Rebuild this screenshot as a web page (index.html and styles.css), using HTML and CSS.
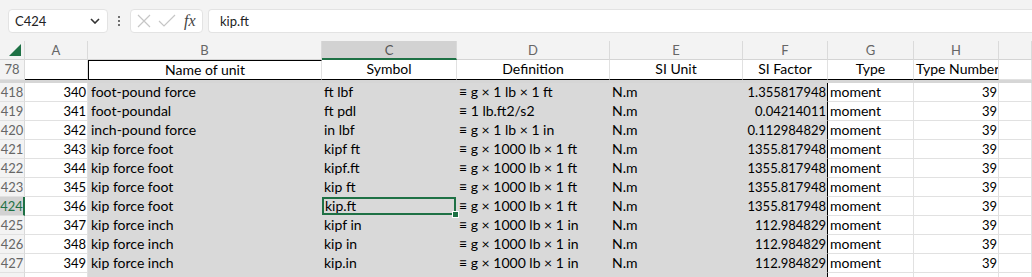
FILE: index.html
```html
<!DOCTYPE html>
<html lang="en">
<head>
  <meta charset="UTF-8">
  <title>Units - Sheet1</title>
  <link rel="stylesheet" href="styles.css">
</head>
<body>
  <div class="toolbar">
    <div class="namebox">
      <span>C424</span>
      <svg class="chev" width="10" height="6" viewBox="0 0 10 6"><path d="M1 1l4 4 4-4" fill="none" stroke="#333" stroke-width="1.6"/></svg>
    </div>
    <div class="dots"><i></i><i></i><i></i></div>
    <div class="fxbox">
      <svg width="16" height="16" viewBox="0 0 16 16"><path d="M2 2l12 12M14 2L2 14" stroke="#c6c6c6" stroke-width="1.2" fill="none"/></svg>
      <svg width="18" height="16" viewBox="0 0 18 16"><path d="M1 8l5 5L17 2" stroke="#c6c6c6" stroke-width="1.2" fill="none"/></svg>
      <span class="fx">fx</span>
    </div>
    <div class="formula">kip.ft</div>
  </div>

  <div class="sheet">
    <div class="row colhdr">
      <div class="corner"><svg width="12" height="12" viewBox="0 0 12 12"><path d="M12 0V12H0z" fill="#1e7145"/></svg></div>
      <div>A</div><div>B</div><div class="sel">C</div><div>D</div><div>E</div><div>F</div><div>G</div><div>H</div><div></div>
    </div>

    <div class="row titles">
      <div class="rh">78</div>
      <div class="c"></div>
      <div class="c ctr b-left b-top">Name of unit</div>
      <div class="c ctr">Symbol</div>
      <div class="c ctr">Definition</div>
      <div class="c ctr">SI Unit</div>
      <div class="c ctr">SI Factor</div>
      <div class="c ctr">Type</div>
      <div class="c ctr">Type Number</div>
      <div class="c blank"></div>
    </div>

    <div class="freeze"></div>

    <div class="row"><div class="rh">418</div><div class="c num">340</div><div class="c g b-left">foot-pound force</div><div class="c g">ft lbf</div><div class="c g">≡ g × 1 lb × 1 ft</div><div class="c g">N.m</div><div class="c g num b-right">1.355817948</div><div class="c">moment</div><div class="c num">39</div><div class="c"></div></div>
    <div class="row"><div class="rh">419</div><div class="c num">341</div><div class="c g b-left">foot-poundal</div><div class="c g">ft pdl</div><div class="c g">≡ 1 lb.ft2/s2</div><div class="c g">N.m</div><div class="c g num b-right">0.04214011</div><div class="c">moment</div><div class="c num">39</div><div class="c"></div></div>
    <div class="row"><div class="rh">420</div><div class="c num">342</div><div class="c g b-left">inch-pound force</div><div class="c g">in lbf</div><div class="c g">≡ g × 1 lb × 1 in</div><div class="c g">N.m</div><div class="c g num b-right">0.112984829</div><div class="c">moment</div><div class="c num">39</div><div class="c"></div></div>
    <div class="row"><div class="rh">421</div><div class="c num">343</div><div class="c g b-left">kip force foot</div><div class="c g">kipf ft</div><div class="c g">≡ g × 1000 lb × 1 ft</div><div class="c g">N.m</div><div class="c g num b-right">1355.817948</div><div class="c">moment</div><div class="c num">39</div><div class="c"></div></div>
    <div class="row"><div class="rh">422</div><div class="c num">344</div><div class="c g b-left">kip force foot</div><div class="c g">kipf.ft</div><div class="c g">≡ g × 1000 lb × 1 ft</div><div class="c g">N.m</div><div class="c g num b-right">1355.817948</div><div class="c">moment</div><div class="c num">39</div><div class="c"></div></div>
    <div class="row"><div class="rh">423</div><div class="c num">345</div><div class="c g b-left">kip force foot</div><div class="c g">kip ft</div><div class="c g">≡ g × 1000 lb × 1 ft</div><div class="c g">N.m</div><div class="c g num b-right">1355.817948</div><div class="c">moment</div><div class="c num">39</div><div class="c"></div></div>
    <div class="row"><div class="rh active">424</div><div class="c num">346</div><div class="c g b-left">kip force foot</div><div class="c g current">kip.ft<span class="handle"></span></div><div class="c g">≡ g × 1000 lb × 1 ft</div><div class="c g">N.m</div><div class="c g num b-right">1355.817948</div><div class="c">moment</div><div class="c num">39</div><div class="c"></div></div>
    <div class="row"><div class="rh">425</div><div class="c num">347</div><div class="c g b-left">kip force inch</div><div class="c g">kipf in</div><div class="c g">≡ g × 1000 lb × 1 in</div><div class="c g">N.m</div><div class="c g num b-right">112.984829</div><div class="c">moment</div><div class="c num">39</div><div class="c"></div></div>
    <div class="row"><div class="rh">426</div><div class="c num">348</div><div class="c g b-left">kip force inch</div><div class="c g">kip in</div><div class="c g">≡ g × 1000 lb × 1 in</div><div class="c g">N.m</div><div class="c g num b-right">112.984829</div><div class="c">moment</div><div class="c num">39</div><div class="c"></div></div>
    <div class="row"><div class="rh">427</div><div class="c num">349</div><div class="c g b-left">kip force inch</div><div class="c g">kip.in</div><div class="c g">≡ g × 1000 lb × 1 in</div><div class="c g">N.m</div><div class="c g num b-right">112.984829</div><div class="c">moment</div><div class="c num">39</div><div class="c"></div></div>
    <div class="row"><div class="rh"></div><div class="c"></div><div class="c g b-left"></div><div class="c g"></div><div class="c g"></div><div class="c g"></div><div class="c g b-right"></div><div class="c"></div><div class="c"></div><div class="c"></div></div>
  </div>
</body>
</html>
```

FILE: styles.css
```css
body {
  margin: 0;
  font-family: Lato, "Open Sans", sans-serif;
  background: #fff;
  overflow: hidden;
  color: #000;
}

/* formula bar */
.toolbar {
  height: 41px;
  background: #f3f3f3;
  display: flex;
  align-items: center;
  padding: 0 0 0 8px;
  box-sizing: border-box;
}

.namebox {
  width: 100px;
  height: 24px;
  background: #fff;
  border: 1px solid #e3e3e3;
  border-radius: 4px;
  box-sizing: border-box;
  display: flex;
  align-items: center;
  justify-content: space-between;
  padding: 0 7px 0 6px;
  font-size: 13px;
  color: #222;
}

.dots {
  width: 22px;
  display: flex;
  flex-direction: column;
  align-items: center;
  gap: 2px;
}

.dots i {
  width: 2px;
  height: 2px;
  background: #444;
  border-radius: 1px;
}

.fxbox {
  width: 73px;
  height: 24px;
  background: #fff;
  border: 1px solid #e3e3e3;
  border-radius: 4px;
  box-sizing: border-box;
  display: flex;
  align-items: center;
  gap: 6px;
  padding: 0 6px 0 5px;
}

.fx {
  font-family: "Liberation Serif", serif;
  font-style: italic;
  font-size: 16px;
  color: #444;
  margin-left: 2px;
}

.formula {
  flex: 1;
  margin-left: 5px;
  height: 24px;
  background: #fff;
  border: 1px solid #e3e3e3;
  border-right: none;
  border-radius: 4px 0 0 4px;
  box-sizing: border-box;
  padding: 0 11px;
  display: flex;
  align-items: center;
  font-size: 13px;
  color: #222;
}

/* grid */
.sheet {
  height: 236px;
  overflow: hidden;
}

.row {
  display: grid;
  grid-template-columns: 25px 63px 234px 135px 153px 133px 85px 86px 85px 1fr;
  height: 19px;
  font-size: 14px;
}

.row > div {
  box-sizing: border-box;
  border-right: 1px solid #e1e1e1;
  border-bottom: 1px solid #e1e1e1;
  white-space: nowrap;
  overflow: hidden;
  line-height: 18px;
  padding: 0 2px;
}

.colhdr {
  background: #f3f3f3;
}

.colhdr > div {
  text-align: center;
  color: #666;
  font-size: 13px;
  border-right-color: #dadada;
  border-bottom-color: #d4d4d4;
}

.colhdr .sel {
  background: #d2d2d2;
  border-bottom: 2px solid #1e7145;
  color: #555;
}

.corner {
  display: flex;
  align-items: flex-end;
  justify-content: flex-end;
  padding: 0 3px 3px 0 !important;
}

.titles {
  height: 20px;
}

.titles .c {
  border-bottom: 1px solid #000;
}

.titles .c:first-of-type,
.titles .blank {
  border-bottom-color: #e1e1e1;
}

.rh {
  background: #f3f3f3;
  color: #666;
  font-size: 13px;
  text-align: center;
  padding: 0 !important;
  border-right-color: #dadada !important;
}

.rh.active {
  background: #d2d2d2;
  color: #1e7145;
  border-right: 2px solid #1e7145 !important;
}

.freeze {
  height: 3px;
  background: #d6d6d6;
}

.ctr {
  text-align: center;
}

.num {
  text-align: right;
  font-size: 13px;
  padding-right: 1px !important;
}

.g {
  background: #d9d9d9;
  border-color: #d9d9d9 !important;
}

.b-left {
  border-left: 1px solid #000;
}

.b-top {
  border-top: 1px solid #000;
}

.b-right {
  border-right: 1px solid #000 !important;
}

.current {
  position: relative;
  overflow: visible !important;
  box-shadow: inset 0 0 0 2px #1e7145;
  padding-left: 3px !important;
}

.handle {
  position: absolute;
  right: -3px;
  bottom: -3px;
  width: 5px;
  height: 5px;
  background: #1e7145;
  border: 1px solid #fff;
}
```
